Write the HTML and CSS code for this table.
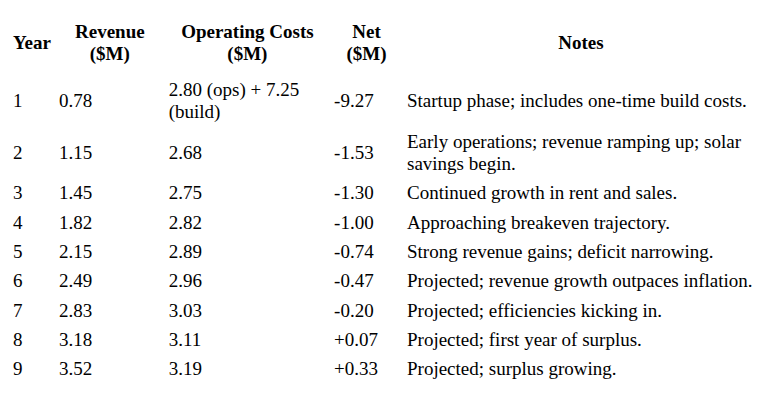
FILE: index.html
```html
<!DOCTYPE html>
<html>
<head>
<meta charset="utf-8">
<link rel="stylesheet" href="styles.css">
</head>
<body>
<table class="fin">
  <thead>
    <tr>
      <th>Year</th>
      <th>Revenue ($M)</th>
      <th>Operating Costs ($M)</th>
      <th>Net ($M)</th>
      <th>Notes</th>
    </tr>
  </thead>
  <tbody>
    <tr><td>1</td><td>0.78</td><td>2.80 (ops) + 7.25 (build)</td><td>-9.27</td><td>Startup phase; includes one-time build costs.</td></tr>
    <tr><td>2</td><td>1.15</td><td>2.68</td><td>-1.53</td><td>Early operations; revenue ramping up; solar savings begin.</td></tr>
    <tr><td>3</td><td>1.45</td><td>2.75</td><td>-1.30</td><td>Continued growth in rent and sales.</td></tr>
    <tr><td>4</td><td>1.82</td><td>2.82</td><td>-1.00</td><td>Approaching breakeven trajectory.</td></tr>
    <tr><td>5</td><td>2.15</td><td>2.89</td><td>-0.74</td><td>Strong revenue gains; deficit narrowing.</td></tr>
    <tr><td>6</td><td>2.49</td><td>2.96</td><td>-0.47</td><td>Projected; revenue growth outpaces inflation.</td></tr>
    <tr><td>7</td><td>2.83</td><td>3.03</td><td>-0.20</td><td>Projected; efficiencies kicking in.</td></tr>
    <tr><td>8</td><td>3.18</td><td>3.11</td><td>+0.07</td><td>Projected; first year of surplus.</td></tr>
    <tr><td>9</td><td>3.52</td><td>3.19</td><td>+0.33</td><td>Projected; surplus growing.</td></tr>
  </tbody>
</table>
</body>
</html>
```

FILE: styles.css
```css
html, body {
  background: #ffffff;
}
body {
  margin: 16px 8px 8px 8px;
  font-family: "Liberation Serif", "Times New Roman", serif;
  font-size: 19px;
  color: #000000;
}
.fin {
  border-spacing: 2px;
}
.fin th,
.fin td {
  padding: 2.7px 3px;
}
.fin th {
  font-weight: bold;
  text-align: center;
  padding-bottom: 10px;
}
.fin td {
  text-align: left;
}
```
